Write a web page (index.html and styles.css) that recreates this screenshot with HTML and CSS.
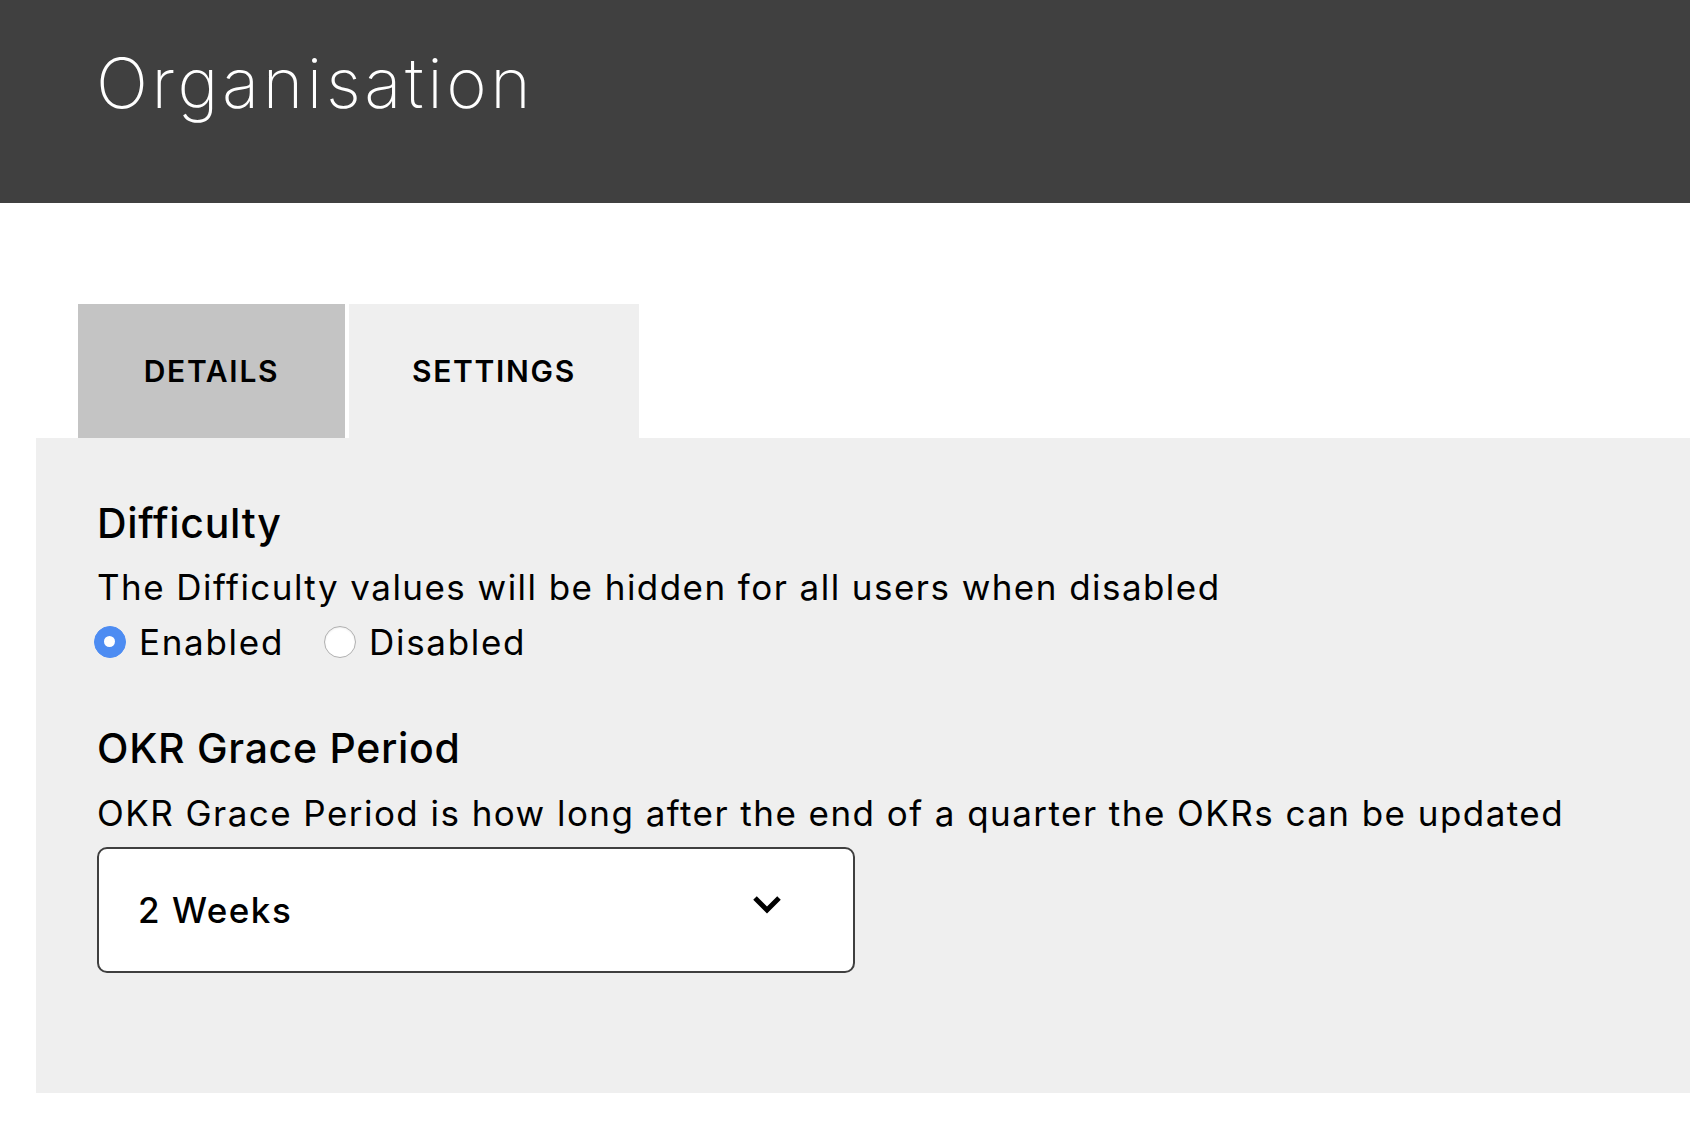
FILE: index.html
```html
<!DOCTYPE html>
<html lang="en">
<head>
  <meta charset="UTF-8" />
  <meta name="viewport" content="width=device-width, initial-scale=1.0" />
  <title>Organisation</title>
  <link rel="stylesheet" href="styles.css">
</head>
<body>
  <div class="header">
    <h1 class="page-title">Organisation</h1>
  </div>

  <div class="tabs">
    <div class="tab tab-details active">DETAILS</div>
    <div class="tab tab-settings">SETTINGS</div>
  </div>

  <div class="panel">
    <div class="section">
      <h2 class="section-title">Difficulty</h2>
      <p class="section-desc">The Difficulty values will be hidden for all users when disabled</p>
      <div class="radio-group">
        <label class="radio-option">
          <span class="radio checked"></span>
          <span>Enabled</span>
        </label>
        <label class="radio-option">
          <span class="radio"></span>
          <span>Disabled</span>
        </label>
      </div>
    </div>

    <div class="section section-grace">
      <h2 class="section-title">OKR Grace Period</h2>
      <p class="section-desc">OKR Grace Period is how long after the end of a quarter the OKRs can be updated</p>
      <div class="select-box">
        <span class="select-value">2 Weeks</span>
        <svg class="select-arrow" width="30" height="20" viewBox="0 0 30 20">
          <polyline points="3,4 15,16 27,4" fill="none" stroke="#000" stroke-width="5" />
        </svg>
      </div>
    </div>
  </div>
</body>
</html>
```

FILE: styles.css
```css
body {
  font-family: "Inter", "Open Sans", sans-serif;
  background-color: #fff;
  color: #000;
  margin: 0;
  padding: 0;
  overflow: hidden;
}
.header {
  background-color: #404040;
  height: 203px;
  box-sizing: border-box;
  padding: 43px 0 0 96px;
}
.page-title {
  margin: 0;
  color: #fff;
  font-size: 69px;
  font-weight: 200;
  line-height: 80px;
  letter-spacing: 3.6px;
}
.tabs {
  display: flex;
  gap: 4px;
  margin: 101px 0 0 78px;
}
.tab {
  height: 134px;
  display: flex;
  align-items: center;
  justify-content: center;
  font-size: 30px;
  font-weight: 600;
  letter-spacing: 1.7px;
}
.tab-details {
  width: 267px;
  background-color: #c4c4c4;
}
.tab-settings {
  width: 290px;
  background-color: #efefef;
}
.panel {
  margin-left: 36px;
  background-color: #efefef;
  padding: 60px 0 120px 61px;
}
.section-title {
  margin: 0 0 14px;
  font-size: 41px;
  font-weight: 500;
  line-height: 50px;
  letter-spacing: 0.7px;
}
.section-desc {
  margin: 0;
  font-size: 35px;
  line-height: 50px;
  letter-spacing: 1.45px;
}
.section-grace {
  margin-top: 56px;
}
.section-grace .section-title {
  margin-bottom: 15px;
}
.radio-group {
  display: flex;
  gap: 40px;
  margin: 5px 0 0 -3px;
  font-size: 35px;
  line-height: 50px;
  letter-spacing: 1.7px;
}
.radio-option {
  display: flex;
  align-items: center;
  gap: 13px;
}
.radio {
  width: 32px;
  height: 32px;
  box-sizing: border-box;
  border-radius: 50%;
  background-color: #fff;
  border: 1px solid #b0b0b0;
  box-shadow: inset 0 1px 2px rgba(0,0,0,0.08);
  position: relative;
}
.radio.checked {
  background-color: #4d8cf2;
  border-color: #4d8cf2;
  box-shadow: none;
}
.radio.checked::after {
  content: "";
  position: absolute;
  width: 11px;
  height: 11px;
  left: 9.5px;
  top: 9.5px;
  margin: -1px;
  border-radius: 50%;
  background-color: #fff;
}
.select-box {
  margin-top: 9px;
  width: 758px;
  height: 126px;
  box-sizing: border-box;
  background-color: #fff;
  border: 2px solid #3f3f3f;
  border-radius: 10px;
  display: flex;
  align-items: center;
  justify-content: space-between;
  padding: 0 71px 0 39px;
}
.select-value {
  font-size: 35px;
  font-weight: 500;
  letter-spacing: 1.5px;
}
.select-arrow {
  margin-top: -12px;
}
```
